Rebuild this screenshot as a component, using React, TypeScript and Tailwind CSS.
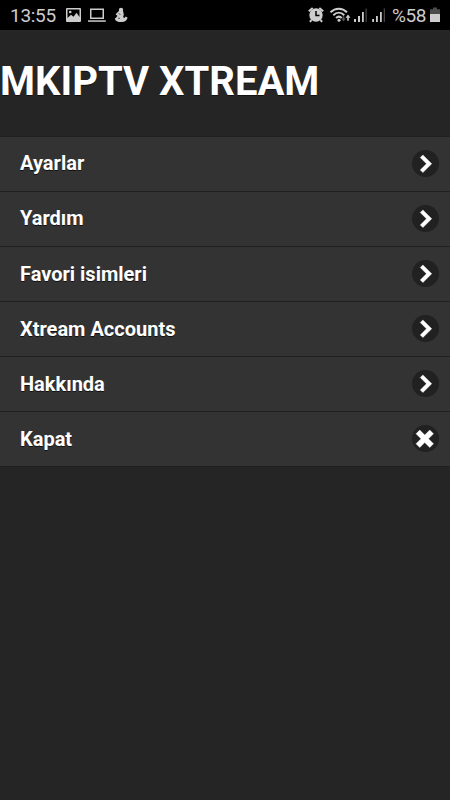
type MenuItem = {
  label: string;
  icon: "next" | "close";
};

const items: MenuItem[] = [
  { label: "Ayarlar", icon: "next" },
  { label: "Yardım", icon: "next" },
  { label: "Favori isimleri", icon: "next" },
  { label: "Xtream Accounts", icon: "next" },
  { label: "Hakkında", icon: "next" },
  { label: "Kapat", icon: "close" },
];

function NotificationIcons() {
  return (
    <svg className="h-[30px] w-[68px]" viewBox="62 0 68 30" fill="#cdcdcd">
      {/* picture */}
      <path
        fillRule="evenodd"
        d="M67 8h13a1 1 0 0 1 1 1v12a1 1 0 0 1-1 1H67a1 1 0 0 1-1-1V9a1 1 0 0 1 1-1zM67.500 9.500V18l3.500-3.200 2.500 2 3-4 3 4.200V9.500z"
      />
      <circle cx="70.200" cy="12" r="1.300" />
      {/* laptop */}
      <path
        fillRule="evenodd"
        d="M90 8.500h14V19H90zM91.500 10v7.500h11V10z"
      />
      <path d="M88 20.300h17.800v1.500H88z" />
      {/* figure */}
      <circle cx="121" cy="9.900" r="2.200" />
      <path d="M119 11h4l.8 3.200-.7 3.100c1 .9 2.100.5 2.500-.9l1.900 1c-.4 2.900-2.900 4.700-6.200 4.700-3.500 0-6.100-1.200-6.500-3.700l1.500-.9c.2-.9.800-1.400 1.400-1.600l-2-1.400.8-1.200z" />
      <path d="M118.500 13.500l2 1M118 18.300h2" stroke="#000" strokeWidth=".6" />
    </svg>
  );
}

function SystemIcons() {
  return (
    <svg className="h-[30px] w-[79px]" viewBox="307 0 79 30" fill="#cdcdcd">
      {/* alarm */}
      <circle cx="316" cy="15" r="6.700" />
      <path
        d="M308.800 11.300l3.900-3.300M323.200 11.300l-3.900-3.300M311.500 20l-1.600 1.800M320.500 20l1.600 1.800"
        stroke="#cdcdcd"
        strokeWidth="2"
        fill="none"
      />
      <path d="M316 11v4.500h3.500" stroke="#000" strokeWidth="1.500" fill="none" />
      {/* wifi */}
      <g fill="none" stroke="#cdcdcd" strokeWidth="2">
        <path d="M330.500 12.200c4.800-4.700 11.700-4.700 16.500 0" />
        <path d="M333.300 15.200c3.300-3.200 7.700-3.200 11 0" />
        <path d="M336 18c1.800-1.700 4-1.700 5.700 0" />
      </g>
      <circle cx="339" cy="20.300" r="1.500" />
      <path d="M348 14.500l2.500 3.200h-1.700v3h-1.600v-3h-1.700z" />
      <path d="M343.500 21.500l-2.300-3h1.500v-2.300h1.600v2.300h1.500z" fill="#555" />
      {/* signal, two sims */}
      <path d="M354 19h2v3h-2zM358 16h2v6h-2zM362 12h1.800v10H362z" />
      <path d="M365.500 8.500h1.300V22h-1.300z" fill="#444" />
      <path d="M372.200 19h1.800v3h-1.800zM376 16h1.800v6H376zM380 12h1.800v10H380z" />
      <path d="M383.700 8.500h1.300V22h-1.300z" fill="#444" />
    </svg>
  );
}

function BatteryIcon() {
  return (
    <svg className="h-[30px] w-[10px]" viewBox="430 0 10 30">
      <path d="M433 7.500h4v1.700h3V14h-10V9.200h3z" fill="#4b4b4b" />
      <path d="M430 14h10v8h-10z" fill="#cdcdcd" />
    </svg>
  );
}

function StatusBar() {
  return (
    <div className="flex h-[30px] items-center bg-black px-[10px] text-[19px] leading-[30px] text-[#cdcdcd]">
      <span className="w-[52px] pt-px tracking-[-0.3px]">13:55</span>
      <NotificationIcons />
      <div className="ml-auto flex items-center">
        <SystemIcons />
        <span className="w-[44px] pt-px pl-[6px] tracking-[-0.4px] whitespace-nowrap">
          %58
        </span>
        <BatteryIcon />
      </div>
    </div>
  );
}

function RowIcon({ icon }: { icon: MenuItem["icon"] }) {
  return (
    <span className="flex size-[27px] items-center justify-center rounded-full bg-[#212121]">
      <svg
        className="size-[17.500px] overflow-visible"
        viewBox="0 0 14 14"
        fill="#fff"
        stroke="#fff"
        strokeWidth=".3"
      >
        {icon === "next" ? (
          <path d="M3.400 2.050L8.350 7 3.400 11.950l2.120 2.120L12.600 7 5.520-.070z" />
        ) : (
          <path d="M14 3l-3-3-4 4-4-4-3 3 4 4-4 4 3 3 4-4 4 4 3-3-4-4z" />
        )}
      </svg>
    </span>
  );
}

export default function App() {
  return (
    <div className="h-[800px] w-[450px] overflow-hidden bg-[#252525] font-[Roboto,sans-serif]">
      <StatusBar />
      <h1 className="h-[106px] pt-[28px] text-[40px] leading-[48px] font-bold text-white [text-shadow:0_1px_0_#111]">
        MKIPTV XTREAM
      </h1>
      <ul className="border-b border-[#1f1f1f]">
        {items.map((item) => (
          <li
            key={item.label}
            className="flex h-[55.080px] items-center justify-between border-t border-[#1f1f1f] bg-[#333] pr-[11.500px] pb-[1.360px] pl-5"
          >
            <span className="text-[20px] leading-[26px] font-bold text-white [text-shadow:0_1px_0_#111]">
              {item.label}
            </span>
            <RowIcon icon={item.icon} />
          </li>
        ))}
      </ul>
    </div>
  );
}
